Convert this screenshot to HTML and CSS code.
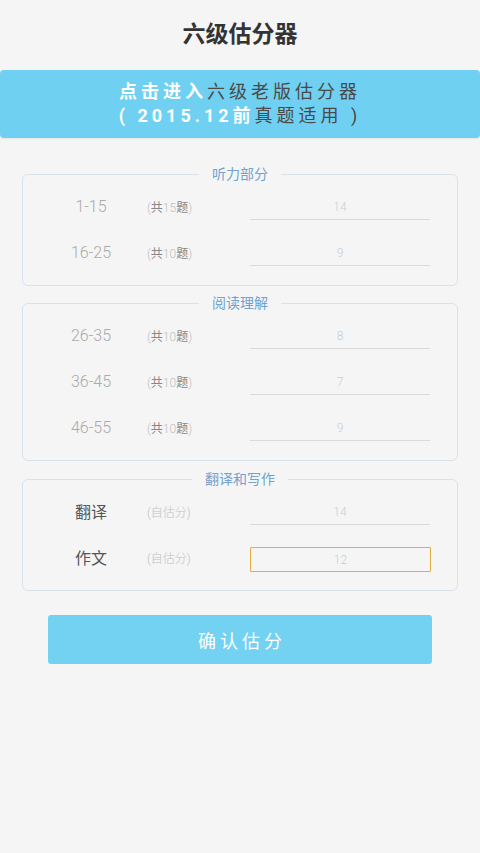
FILE: index.html
```html
<!DOCTYPE html>
<html lang="zh">
<head>
<meta charset="utf-8">
<link rel="stylesheet" href="styles.css">
</head>
<body>
<header class="title">六级估分器</header>
<div class="banner">
  <div><b>点击进入</b>六级老版估分器</div>
  <div><b>( 2015.12前</b>真题适用 )</div>
</div>
<fieldset class="group">
  <legend>听力部分</legend>
  <div class="row"><span class="label">1-15</span><span class="note">(<em>共</em>15<em>题</em>)</span><span class="input">14</span></div>
  <div class="row"><span class="label">16-25</span><span class="note">(<em>共</em>10<em>题</em>)</span><span class="input">9</span></div>
</fieldset>
<fieldset class="group g2">
  <legend>阅读理解</legend>
  <div class="row"><span class="label">26-35</span><span class="note">(<em>共</em>10<em>题</em>)</span><span class="input">8</span></div>
  <div class="row"><span class="label">36-45</span><span class="note">(<em>共</em>10<em>题</em>)</span><span class="input">7</span></div>
  <div class="row"><span class="label">46-55</span><span class="note">(<em>共</em>10<em>题</em>)</span><span class="input">9</span></div>
</fieldset>
<fieldset class="group g3">
  <legend>翻译和写作</legend>
  <div class="row"><span class="label dark">翻译</span><span class="note">(自估分)</span><span class="input">14</span></div>
  <div class="row"><span class="label dark">作文</span><span class="note">(自估分)</span><span class="input focus">12</span></div>
</fieldset>
<button class="confirm">确认估分</button>
</body>
</html>
```
FILE: styles.css
```css
* { box-sizing: border-box; }
body {
  margin: 0;
  background: #f5f5f5;
  font-family: Roboto, "Noto Sans CJK SC", sans-serif;
  width: 480px;
  height: 853px;
}
.title {
  height: 70px;
  line-height: 70px;
  text-align: center;
  font-size: 23px;
  font-weight: bold;
  color: #333;
}
.banner {
  height: 68px;
  background: #70d0f1;
  border-radius: 4px;
  padding: 10px 0;
  text-align: center;
  font-size: 18px;
  line-height: 24px;
  letter-spacing: 4px;
  color: #4a4a4a;
  box-shadow: 0 1px 2px rgba(0,0,0,0.08);
}
.banner b { color: #fff; font-weight: bold; }
.group {
  margin: 28px 22px 0;
  padding: 1px 0 10px;
  border: 1px solid #d9e1ea;
  border-radius: 6px;
  min-width: 0;
}
.group.g2 { margin-top: 9px; }
.group.g3 { margin-top: 10px; }
.group legend {
  margin: 0 auto;
  padding: 0 13px;
  font-size: 14px;
  line-height: 16px;
  color: #72a2d0;
}
.row {
  height: 46px;
  display: flex;
  align-items: center;
  padding-left: 36px;
}
.label {
  width: 64px;
  text-align: center;
  font-size: 16px;
  font-weight: 300;
  color: #aaa;
}
.label.dark { color: #555; font-weight: 400; }
.note {
  margin-left: 24px;
  width: 103px;
  font-size: 12px;
  color: #c0c0c0;
  font-weight: 300;
}
.note em { font-style: normal; color: #888; font-weight: 400; }
.input {
  width: 180px;
  height: 25px;
  line-height: 25px;
  text-align: center;
  font-size: 12px;
  font-weight: 300;
  color: #c2cfdc;
  border-bottom: 1px solid #dadada;
  margin-top: 2px;
}
.input.focus {
  border: 1px solid #dfae3d;
  border-radius: 1px;
  width: 181px;
  margin-top: 4px;
}
.confirm {
  display: block;
  margin: 24px auto 0;
  width: 384px;
  height: 49px;
  border: none;
  border-radius: 3px;
  background: #73d2f2;
  color: #fff;
  font-family: Roboto, "Noto Sans CJK SC", sans-serif;
  font-size: 18px;
  letter-spacing: 4px;
  padding: 0 0 0 4px;
}
```
